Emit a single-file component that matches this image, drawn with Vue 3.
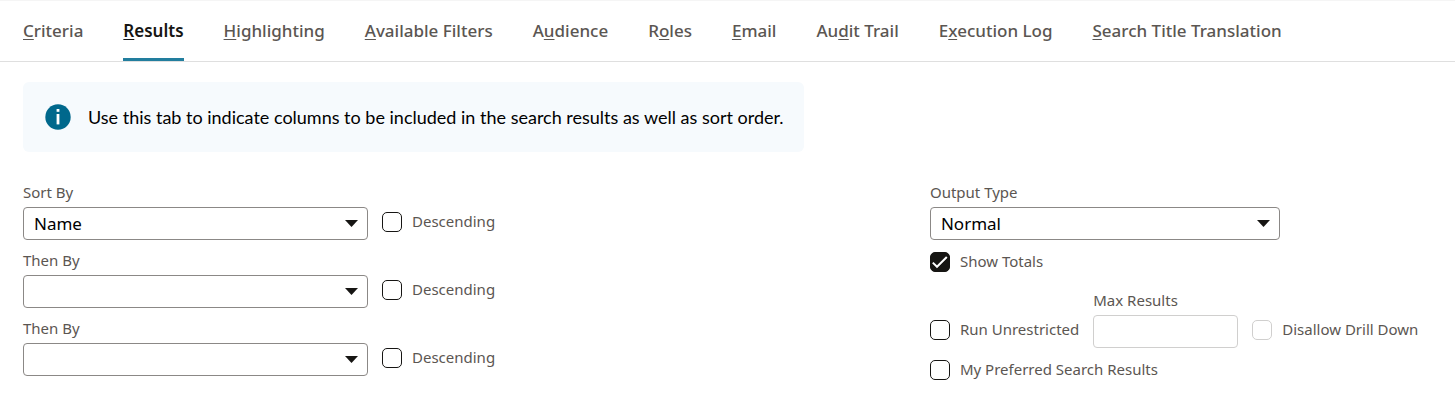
<script setup>
import { ref } from 'vue'

const tabs = [
  { before: '', key: 'C', after: 'riteria' },
  { before: '', key: 'R', after: 'esults', active: true },
  { before: '', key: 'H', after: 'ighlighting' },
  { before: '', key: 'A', after: 'vailable Filters' },
  { before: 'A', key: 'u', after: 'dience' },
  { before: 'R', key: 'o', after: 'les' },
  { before: '', key: 'E', after: 'mail' },
  { before: 'Au', key: 'd', after: 'it Trail' },
  { before: 'E', key: 'x', after: 'ecution Log' },
  { before: '', key: 'S', after: 'earch Title Translation' },
]

const sorts = ref([
  { id: 'sort1', label: 'Sort By', value: 'Name', descending: false },
  { id: 'sort2', label: 'Then By', value: '', descending: false },
  { id: 'sort3', label: 'Then By', value: '', descending: false },
])
const outputType = ref('Normal')
const showTotals = ref(true)
const unrestricted = ref(false)
const preferred = ref(false)
</script>

<template>
  <div class="page">
    <nav class="tabs">
      <a
        v-for="tab in tabs"
        :key="tab.key + tab.after"
        href="#"
        class="tab"
        :class="{ active: tab.active }"
        :aria-current="tab.active ? 'page' : undefined"
      >{{ tab.before }}<span class="key">{{ tab.key }}</span>{{ tab.after }}</a>
    </nav>

    <main class="content">
      <div class="banner">
        <svg class="info" viewBox="0 0 26 26" aria-hidden="true">
          <circle cx="13" cy="13" r="12.7" fill="#00688c" />
          <rect x="11.6" y="5" width="2.8" height="2.8" fill="#fff" />
          <rect x="11.6" y="10" width="2.8" height="10.4" fill="#fff" />
        </svg>
        <p>Use this tab to indicate columns to be included in the search results as well as sort order.</p>
      </div>

      <form class="columns" @submit.prevent>
        <div class="sorts">
          <div v-for="sort in sorts" :key="sort.id" class="row">
            <div class="field sort-field">
              <label :for="sort.id">{{ sort.label }}</label>
              <div class="select">
                <select :id="sort.id" v-model="sort.value">
                  <option value=""></option>
                  <option>Name</option>
                </select>
                <svg class="arrow" viewBox="0 0 13 7" aria-hidden="true"><path d="M0 0h13L6.5 7z" fill="#161513" /></svg>
              </div>
            </div>
            <label class="check"><input v-model="sort.descending" type="checkbox"><span>Descending</span></label>
          </div>
        </div>

        <div class="output">
          <div class="field output-field">
            <label for="output">Output Type</label>
            <div class="select">
              <select id="output" v-model="outputType">
                <option>Normal</option>
              </select>
              <svg class="arrow" viewBox="0 0 13 7" aria-hidden="true"><path d="M0 0h13L6.5 7z" fill="#161513" /></svg>
            </div>
          </div>
          <label class="check"><input v-model="showTotals" type="checkbox"><span>Show Totals</span></label>
          <div class="row limits">
            <label class="check"><input v-model="unrestricted" type="checkbox"><span>Run Unrestricted</span></label>
            <div class="field max-field">
              <label for="max">Max Results</label>
              <input id="max" class="text" type="text" disabled>
            </div>
            <label class="check"><input type="checkbox" disabled><span>Disallow Drill Down</span></label>
          </div>
          <label class="check"><input v-model="preferred" type="checkbox"><span>My Preferred Search Results</span></label>
        </div>
      </form>
    </main>
  </div>
</template>

<style>
body {
  background: #fff;
}
</style>

<style scoped>
.page {
  font-family: "Noto Sans", "Open Sans", sans-serif;
  font-size: 15px;
  line-height: 20px;
  color: #5b5652;
}

.tabs {
  display: flex;
  gap: 40px;
  padding: 0 23px;
  border-top: 1px solid #f5f5f5;
  border-bottom: 1px solid #dfdfdf;
}

.tab {
  padding: 18px 0 15px;
  border-bottom: 3px solid transparent;
  font-size: 17px;
  font-weight: 500;
  line-height: 24px;
  color: #5b5652;
  text-decoration: none;
  white-space: nowrap;
}

.tab.active {
  border-color: #227e9e;
  color: #161513;
  font-weight: 600;
}

.key {
  text-decoration: underline;
  text-decoration-thickness: 1px;
  text-underline-offset: 2px;
}

.content {
  padding: 20px 0 24px 23px;
}

.banner {
  display: flex;
  align-items: center;
  gap: 17px;
  width: fit-content;
  padding: 22px 20px 22px 22px;
  border-radius: 6px;
  background: #f6fafd;
  font-family: Lato, "Noto Sans", sans-serif;
  font-size: 18px;
  line-height: 26px;
  color: #000;
}

.banner p {
  margin: 0;
}

.info {
  flex: none;
  width: 26px;
  height: 26px;
}

.columns {
  display: grid;
  grid-template-columns: 19fr 11fr;
  margin-top: 30px;
}

.sorts {
  display: flex;
  flex-direction: column;
  gap: 10px;
}

.row {
  display: flex;
  align-items: flex-end;
  gap: 14px;
}

.field {
  display: flex;
  flex-direction: column;
  gap: 4px;
}

.field label {
  line-height: 21px;
}

.sort-field {
  width: 345px;
}

.output-field {
  width: 350px;
}

.max-field {
  width: 145px;
}

.select {
  display: grid;
  align-items: center;
}

.select select,
.arrow {
  grid-area: 1 / 1;
}

.select select,
.text {
  appearance: none;
  box-sizing: border-box;
  width: 100%;
  height: 33px;
  margin: 0;
  padding: 0 30px 0 10px;
  border: 1px solid #8b8886;
  border-radius: 4px;
  background: #fff;
  font: inherit;
  font-size: 17px;
  color: #000;
}

.text:disabled {
  border-color: #d0cfce;
}

.arrow {
  justify-self: end;
  width: 13px;
  height: 7px;
  margin-right: 10px;
  pointer-events: none;
}

.check {
  display: flex;
  align-items: center;
  gap: 10px;
  width: fit-content;
  padding: 3px 0 7px;
  white-space: nowrap;
}

.check span {
  padding-bottom: 2px;
}

.check input {
  appearance: none;
  box-sizing: border-box;
  flex: none;
  width: 20px;
  height: 20px;
  margin: 0;
  border: 1px solid #161513;
  border-radius: 5px;
  background: #fff;
}

.check input:checked {
  background: #161513 url("data:image/svg+xml,%3Csvg xmlns='http://www.w3.org/2000/svg' viewBox='0 0 18 18'%3E%3Cpath d='M1.8 9.6l4.2 4.2L15.8 4' fill='none' stroke='white' stroke-width='2'/%3E%3C/svg%3E") center / 18px 18px;
}

.check input:disabled {
  border-color: #d0cfce;
}

.output {
  display: flex;
  flex-direction: column;
  gap: 8px;
}

.limits {
  margin-top: 2px;
}
</style>
